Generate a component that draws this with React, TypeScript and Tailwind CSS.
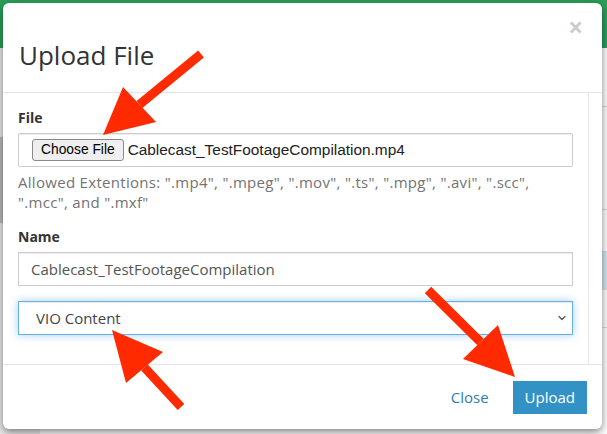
import { ChevronDown } from 'lucide-react'

// red annotation arrows drawn over the screenshot
const arrows = [
  { tail: [201, 54], base: [139.5, 104.5], head: '103,135 123,87 156,122' },
  { tail: [181, 407], base: [144.5, 367.5], head: '112,330 163,352 126,383' },
  { tail: [428, 290], base: [480.5, 342], head: '515,377 498,325 463,359' },
]

function Backdrop() {
  return (
    <div className="absolute inset-0 flex flex-col bg-white">
      <div className="h-[48px] bg-[#2ba05b]" />
      <div className="flex flex-1">
        <div className="flex w-[40px] flex-col bg-[#ececec]">
          <div className="h-[89px]" />
          <div className="h-[86px] bg-[#bcbcbc]" />
        </div>
        <div className="flex flex-1 flex-col">
          <div className="h-[59px] border-b border-[#dddddd]" />
          <div className="h-[103px] border-b border-[#dddddd]" />
          <div className="h-[42px] border-b border-[#dddddd]" />
          <div className="h-[38px] bg-[#d6e6ef]" />
          <div className="h-[38px] border-b border-[#dddddd]" />
        </div>
      </div>
    </div>
  )
}

export default function App() {
  return (
    <div className="relative h-[434px] w-[607px] overflow-hidden font-['Open_Sans',sans-serif] text-[14px] text-[#333]">
      <Backdrop />

      {/* modal */}
      <div className="absolute inset-0 pl-[3px] pr-[5px] pt-[3px] pb-[5px]">
        <div className="flex h-full flex-col overflow-hidden rounded-[6px] bg-white shadow-[0_3px_9px_rgba(0,0,0,0.5)]">
          <div className="flex h-[90px] flex-col border-b border-[#e5e5e5] px-[16px] pt-[14px]">
            <div className="flex h-[20px] justify-end">
              <span className="mr-[3px] text-[26px] leading-[20px] font-bold text-[#cccccc]">×</span>
            </div>
            <h4 className="mt-[2px] text-[26px] leading-[32px] text-[#333]">Upload File</h4>
          </div>

          <div className="flex flex-1">
            <div className="flex flex-1 flex-col px-[15px] pt-[15px]">
              <label className="font-bold leading-[20px]">File</label>
              <div className="mt-[5px] flex h-[34px] items-center rounded-[2px] border border-[#cccccc] px-[13px] shadow-[inset_0_1px_1px_rgba(0,0,0,0.075)]">
                <span className="rounded-[3px] border border-[#8a8a8a] bg-[#efefef] px-[8px] font-['Liberation_Sans',Arial,sans-serif] text-[13.8px] leading-[20px] text-black">
                  Choose File
                </span>
                <span className="ml-[4px] font-['Liberation_Sans',Arial,sans-serif] text-[15.4px] text-[#222]">
                  Cablecast_TestFootageCompilation.mp4
                </span>
              </div>
              <p className="mt-[5px] text-[15px] leading-[20px] tracking-[0.3px] text-[#737373]">
                Allowed Extentions: ".mp4", ".mpeg", ".mov", ".ts", ".mpg", ".avi", ".scc", ".mcc", and ".mxf"
              </p>

              <label className="mt-[15px] font-bold leading-[20px]">Name</label>
              <div className="mt-[5px] flex h-[34px] items-center border border-[#cccccc] px-[12px] text-[15px] text-[#555] shadow-[inset_0_1px_1px_rgba(0,0,0,0.075)]">
                Cablecast_TestFootageCompilation
              </div>

              <div className="mt-[15px] flex h-[34px] items-center justify-between border border-[#66afe9] pl-[17px] pr-[4px] text-[15px] text-[#444] shadow-[inset_0_1px_1px_rgba(0,0,0,0.075),0_0_8px_rgba(102,175,233,0.6)]">
                <span>VIO Content</span>
                <ChevronDown size={12} strokeWidth={2.5} className="text-[#555]" />
              </div>
            </div>
            <div className="w-[14px] border-l border-[#e8e8e8] bg-white" />
          </div>

          <div className="flex h-[65px] items-start justify-end gap-[12px] border-t border-[#e5e5e5] px-[15px] pt-[16px] text-[15px]">
            <span className="px-[12px] leading-[33px] text-[#2f7cb9]">Close</span>
            <span className="h-[33px] bg-[#3292c6] px-[12px] leading-[33px] text-white">Upload</span>
          </div>
        </div>
      </div>

      <svg className="pointer-events-none absolute inset-0" width="607" height="434">
        {arrows.map((a, i) => (
          <g key={i} fill="#ff2a00" stroke="#ff2a00">
            <line x1={a.tail[0]} y1={a.tail[1]} x2={a.base[0]} y2={a.base[1]} strokeWidth="9" />
            <polygon points={a.head} strokeWidth="0" />
          </g>
        ))}
      </svg>
    </div>
  )
}
